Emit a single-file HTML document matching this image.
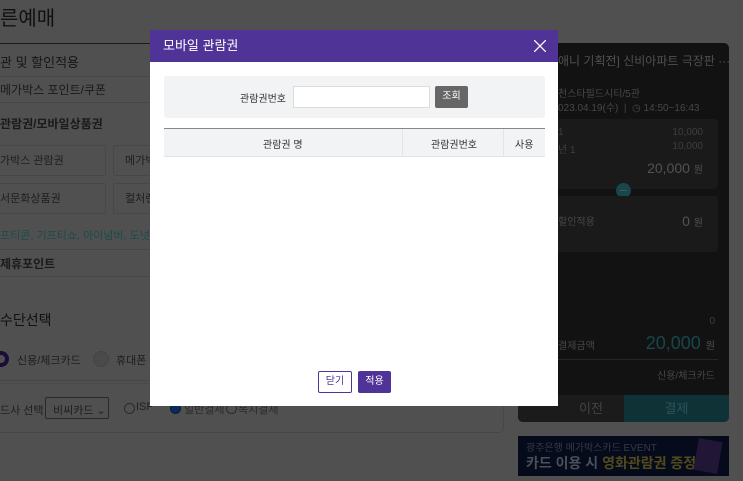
<!DOCTYPE html>
<html><head><meta charset="utf-8"><style>
*{margin:0;padding:0;box-sizing:border-box}
body{width:743px;height:481px;overflow:hidden;background:#505050;font-family:"Liberation Sans","Noto Sans CJK KR",sans-serif;position:relative;color:#141414}
.a{position:absolute;white-space:nowrap}
.ln{position:absolute;height:1px;background:#464646}
.box{position:absolute;border:1px solid #474747;border-radius:2px}
.t{font-size:11px;color:#1e1e1e}
</style></head><body>
<div class="a" style="left:0;top:2px;font-size:20px;color:#111">른예매</div>
<div class="ln" style="left:0;top:43px;width:150px;background:#1c1c1c"></div>
<div class="a" style="left:0;top:52px;font-size:13px;color:#161616">관 및 할인적용</div>
<div class="ln" style="left:0;top:76px;width:150px"></div>
<div class="a" style="left:0;top:81px;font-size:12px;color:#1a1a1a">메가박스 포인트/쿠폰</div>
<div class="ln" style="left:0;top:102px;width:150px"></div>
<div class="a" style="left:0;top:115px;font-size:12px;font-weight:bold;color:#1a1a1a">관람권/모바일상품권</div>
<div class="box" style="left:-2px;top:145px;width:108px;height:31px"></div>
<div class="box" style="left:113px;top:145px;width:50px;height:31px"></div>
<div class="box" style="left:-2px;top:183px;width:108px;height:31px"></div>
<div class="box" style="left:113px;top:183px;width:50px;height:31px"></div>
<div class="a t" style="left:0;top:152px">가박스 관람권</div>
<div class="a t" style="left:125px;top:152px">메가박</div>
<div class="a t" style="left:0;top:190px">서문화상품권</div>
<div class="a t" style="left:125px;top:190px">컬처랜</div>
<div class="a" style="left:0;top:227px;font-size:11px;color:#1d4a4a">프티콘, 기프티쇼, 아이넘버, 도넛북, 스</div>
<div class="ln" style="left:0;top:249px;width:150px"></div>
<div class="a" style="left:0;top:255px;font-size:12px;font-weight:bold;color:#1a1a1a">제휴포인트</div>
<div class="ln" style="left:0;top:276px;width:150px"></div>
<div class="a" style="left:0;top:310px;font-size:14px;color:#111">수단선택</div>
<div class="a" style="left:-7px;top:351px;width:16px;height:16px;border-radius:50%;border:4px solid #1a0d3a"></div>
<div class="a t" style="left:17px;top:352px">신용/체크카드</div>
<div class="a" style="left:93px;top:351px;width:16px;height:16px;border-radius:50%;border:1px solid #444;background:#4a4a4a"></div>
<div class="a t" style="left:116px;top:352px">휴대폰 결</div>
<div class="ln" style="left:0;top:383px;width:150px;background:#4a4a4a"></div>
<div class="a t" style="left:0;top:402px">드사 선택</div>
<div class="box" style="left:45px;top:397px;width:64px;height:22px;border-color:#2a2a2a"></div>
<div class="a t" style="left:53px;top:402px">비씨카드 ⌄</div>
<div class="a" style="left:124px;top:403px;width:11px;height:11px;border-radius:50%;border:1px solid #2a2a2a"></div>
<div class="a t" style="left:136px;top:401px">ISP</div>
<div class="a" style="left:170px;top:403px;width:11px;height:11px;border-radius:50%;border:1px solid #0a1a3a;background:#0b2a5a"></div>
<div class="a t" style="left:184px;top:401px;color:#2a2a2a">일반결제</div>
<div class="a" style="left:226px;top:403px;width:11px;height:11px;border-radius:50%;border:1px solid #2a2a2a"></div>
<div class="a t" style="left:238px;top:401px;color:#2a2a2a">복지결제</div>
<div class="a" style="left:-10px;top:380px;width:514px;height:53px;border:1px solid #474747;border-radius:5px"></div>

<div class="a" style="left:518px;top:43px;width:211px;height:379px;background:#121212;border-radius:5px;overflow:hidden">
 <div class="a" style="left:40px;top:9px;font-size:12px;color:#505050">애니 기획전] 신비아파트 극장판 ···</div>
 <div class="a" style="left:40px;top:42px;font-size:10px;color:#474747">천스타필드시티/5관</div>
 <div class="a" style="left:40px;top:56px;font-size:10px;color:#474747">023.04.19(수) &nbsp;| &nbsp;◷ 14:50~16:43</div>
 <div class="a" style="left:0;top:76px;width:200px;height:70px;background:#1a1a1a;border-radius:4px"></div>
 <div class="a" style="left:40px;top:84px;font-size:10px;color:#3e3e3e">1</div>
 <div class="a" style="left:40px;top:98px;font-size:10px;color:#3e3e3e">년 1</div>
 <div class="a" style="right:26px;top:84px;font-size:10px;color:#3e3e3e">10,000</div>
 <div class="a" style="right:26px;top:98px;font-size:10px;color:#3e3e3e">10,000</div>
 <div class="a" style="right:26px;top:117px;font-size:14px;color:#525252">20,000 <span style="font-size:10px">원</span></div>
 <div class="a" style="left:98px;top:140px;width:15px;height:15px;border-radius:50%;background:#17464d"><div style="margin:7px auto 0;width:7px;height:1px;background:#555"></div></div>
 <div class="a" style="left:0;top:153px;width:200px;height:56px;background:#1a1a1a;border-radius:4px"></div>
 <div class="a" style="left:40px;top:170px;font-size:10px;color:#474747">할인적용</div>
 <div class="a" style="right:26px;top:170px;font-size:14px;color:#525252">0 <span style="font-size:10px">원</span></div>
 <div class="a" style="right:14px;top:273px;font-size:10px;color:#3e3e3e">0</div>
 <div class="a" style="left:40px;top:294px;font-size:10px;color:#474747">결제금액</div>
 <div class="a" style="right:14px;top:290px;font-size:18px;color:#17464d">20,000 <span style="font-size:10px;color:#525252">원</span></div>
 <div class="a" style="left:0;top:316px;width:200px;height:1px;background:#262626"></div>
 <div class="a" style="right:14px;top:324px;font-size:10px;color:#474747">신용/체크카드</div>
 <div class="a" style="left:0;top:352px;width:106px;height:27px;background:#1b1b1b;color:#444;font-size:13px;text-align:center;line-height:27px;padding-left:40px">이전</div>
 <div class="a" style="left:106px;top:352px;width:105px;height:27px;background:#0f3237;color:#2a5358;font-size:13px;text-align:center;line-height:27px">결제</div>
</div>
<div class="a" style="left:518px;top:436px;width:211px;height:40px;background:#050b1a;overflow:hidden">
 <div class="a" style="left:8px;top:3px;font-size:10px;color:#353a48">광주은행 메가박스카드 EVENT</div>
 <div class="a" style="left:8px;top:17px;font-size:14px;font-weight:bold;color:#4a4f5a">카드 이용 시 <span style="color:#524a1c">영화관람권 증정!</span></div>
 <div class="a" style="left:178px;top:4px;width:24px;height:32px;background:#221636;transform:rotate(10deg)"></div>
</div>

<div class="a" style="left:150px;top:30px;width:408px;height:376px;background:#fff">
 <div style="height:32px;background:#503396;color:#fff;font-size:13px;line-height:32px;padding-left:13px;font-weight:normal">모바일 관람권
  <svg style="position:absolute;right:12px;top:10px" width="12" height="12" viewBox="0 0 12 12"><path d="M0 0L12 12M12 0L0 12" stroke="#fff" stroke-width="1.3"/></svg></div>
 <div class="a" style="left:14px;top:46px;width:381px;height:42px;background:#f2f3f5;border-radius:3px"></div>
 <div class="a" style="left:90px;top:60px;font-size:10px;color:#333">관람권번호</div>
 <div class="a" style="left:143px;top:56px;width:137px;height:22px;background:#fff;border:1px solid #dcdcdc"></div>
 <div class="a" style="left:285px;top:56px;width:33px;height:22px;background:#666;border-radius:2px;color:#fff;font-size:10px;text-align:center;line-height:22px">조회</div>
 <div class="a" style="left:14px;top:98px;width:381px;height:29px;background:#f2f3f5;border-top:1px solid #888;border-bottom:1px solid #e4e4e4"></div>
 <div class="a" style="left:252px;top:99px;width:1px;height:27px;background:#e4e4e4"></div>
 <div class="a" style="left:353px;top:99px;width:1px;height:27px;background:#e4e4e4"></div>
 <div class="a" style="left:113px;top:106px;font-size:10px;color:#333">관람권 명</div>
 <div class="a" style="left:281px;top:106px;font-size:10px;color:#333">관람권번호</div>
 <div class="a" style="left:365px;top:106px;font-size:10px;color:#333">사용</div>
 <div class="a" style="left:168px;top:341px;width:34px;height:22px;border:1px solid #503396;border-radius:2px;color:#503396;font-size:10px;text-align:center;line-height:20px">닫기</div>
 <div class="a" style="left:208px;top:341px;width:33px;height:22px;background:#503396;border-radius:2px;color:#fff;font-size:10px;text-align:center;line-height:22px">적용</div>
</div>
</body></html>
